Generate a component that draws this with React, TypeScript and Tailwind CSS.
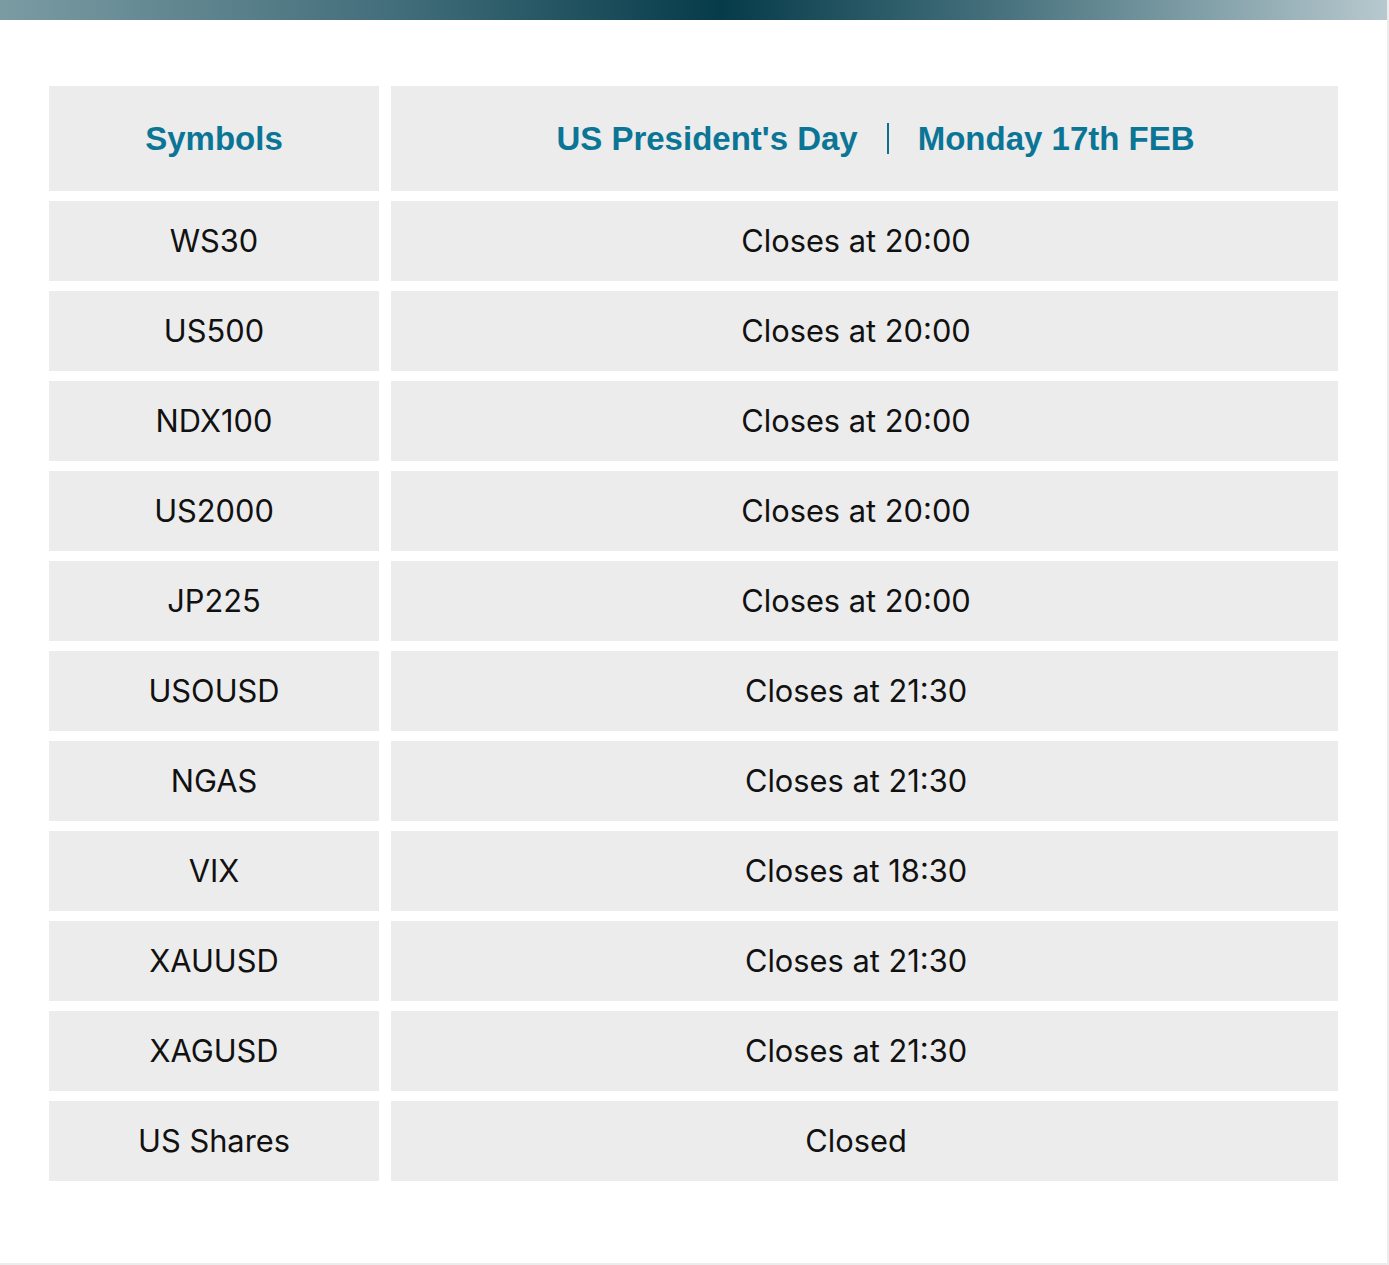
import React from 'react';

const rows = [
  { symbol: 'WS30', time: 'Closes at 20:00' },
  { symbol: 'US500', time: 'Closes at 20:00' },
  { symbol: 'NDX100', time: 'Closes at 20:00' },
  { symbol: 'US2000', time: 'Closes at 20:00' },
  { symbol: 'JP225', time: 'Closes at 20:00' },
  { symbol: 'USOUSD', time: 'Closes at 21:30' },
  { symbol: 'NGAS', time: 'Closes at 21:30' },
  { symbol: 'VIX', time: 'Closes at 18:30' },
  { symbol: 'XAUUSD', time: 'Closes at 21:30' },
  { symbol: 'XAGUSD', time: 'Closes at 21:30' },
  { symbol: 'US Shares', time: 'Closed' },
];

const App: React.FC = () => {
  return (
    <div className="w-[1389px] h-[1265px] bg-white border-r-2 border-b-2 border-[#ececec]">
      {/* top gradient bar */}
      <div className="h-[20px] w-full bg-[linear-gradient(to_right,#7b9ba3_0%,#3f6b78_30%,#063b4a_52%,#46717d_72%,#b7c9ce_100%)]" />

      <div className="pl-[49px] pt-[66px]">
        <div className="grid grid-cols-[330px_947px] gap-x-[12px] gap-y-[10px] font-['Inter',sans-serif] text-[30.8px] text-[#111111]">
          {/* header */}
          <div className="h-[105px] bg-[#ececec] flex items-center justify-center font-['Liberation_Sans',Arial,sans-serif] font-bold text-[33px] text-[#0b7596]">
            Symbols
          </div>
          <div className="h-[105px] bg-[#ececec] flex items-center justify-center pl-[22px] font-['Liberation_Sans',Arial,sans-serif] font-bold text-[33px] text-[#0b7596]">
            <span>US President's Day</span>
            <span className="mx-[29px] w-[2px] h-[31px] bg-[#0e6f8d]" />
            <span>Monday 17th FEB</span>
          </div>

          {rows.map((r) => (
            <React.Fragment key={r.symbol}>
              <div className="h-[80px] bg-[#ececec] flex items-center justify-center">{r.symbol}</div>
              <div className="h-[80px] bg-[#ececec] flex items-center justify-center pr-[17px]">{r.time}</div>
            </React.Fragment>
          ))}
        </div>
      </div>
    </div>
  );
};

export default App;
